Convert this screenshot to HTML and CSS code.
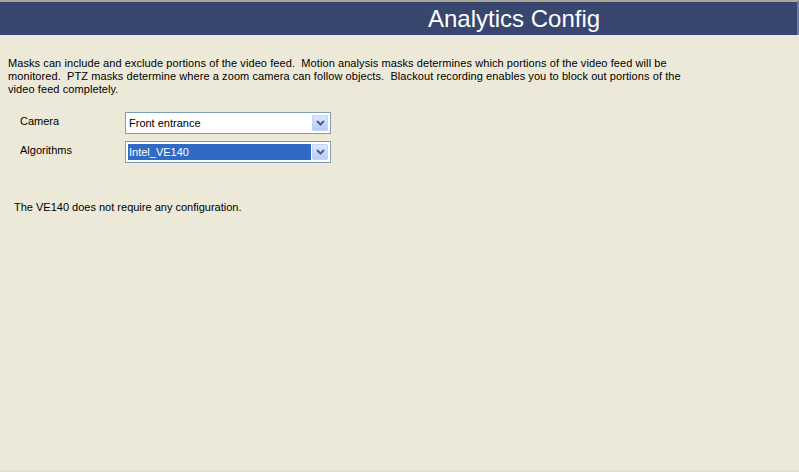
FILE: index.html
```html
<!DOCTYPE html>
<html>
<head>
<meta charset="utf-8">
<link rel="stylesheet" href="styles.css">
</head>
<body>
<div class="page">
  <header class="header">
    <h1 class="title">Analytics Config</h1>
  </header>
  <p class="intro">Masks can include and exclude portions of the video feed.&nbsp; Motion analysis masks determines which portions of the video feed will be monitored.&nbsp; PTZ masks determine where a zoom camera can follow objects.&nbsp; Blackout recording enables you to block out portions of the video feed completely.</p>
  <div class="form">
    <div class="row">
      <span class="label">Camera</span>
      <div class="combo">
        <span class="value">Front entrance</span>
        <span class="btn"><svg width="9" height="6" viewBox="0 0 9 6"><path d="M1 1 L4.5 4.5 L8 1" fill="none" stroke="#4d6185" stroke-width="2"/></svg></span>
      </div>
    </div>
    <div class="row">
      <span class="label">Algorithms</span>
      <div class="combo">
        <span class="value selected">Intel_VE140</span>
        <span class="btn"><svg width="9" height="6" viewBox="0 0 9 6"><path d="M1 1 L4.5 4.5 L8 1" fill="none" stroke="#4d6185" stroke-width="2"/></svg></span>
      </div>
    </div>
  </div>
  <p class="note">The VE140 does not require any configuration.</p>
</div>
</body>
</html>
```

FILE: styles.css
```css
html, body {
  margin: 0;
  padding: 0;
  background: #ece9d8;
}
.page {
  width: 799px;
  height: 472px;
  box-sizing: border-box;
  border-bottom: 2px solid #e4e1d0;
  font-family: "Liberation Sans", Arial, sans-serif;
  font-size: 11px;
  color: #000;
}
.header {
  background: #39466f;
  border-top: 2px solid #a9a899;
  border-right: 2px solid #6d7aa3;
  height: 33px;
  box-sizing: content-box;
  display: flex;
  align-items: center;
}
.title {
  margin: 0 0 0 428px;
  font-weight: normal;
  font-size: 24px;
  color: #ffffff;
  line-height: 33px;
  padding-top: 0;
}
.intro {
  margin: 22px 0 0 8px;
  width: 700px;
  line-height: 13px;
  letter-spacing: 0.08px;
}
.form {
  margin-top: 16px;
  display: flex;
  flex-direction: column;
  gap: 7px;
}
.row {
  display: flex;
  align-items: flex-start;
}
.label {
  width: 105px;
  padding-left: 20px;
  padding-top: 3px;
}
.combo {
  width: 206px;
  height: 22px;
  box-sizing: border-box;
  border: 1px solid #7f9db9;
  background: #fff;
  display: flex;
  align-items: center;
  padding: 2px;
  gap: 1px;
}
.value {
  flex: 1;
  height: 16px;
  line-height: 16px;
  padding-left: 1px;
  font-size: 11px;
}
.value.selected {
  background: #316ac5;
  color: #fff;
}
.btn {
  width: 16px;
  height: 16px;
  box-sizing: border-box;
  border: 1px solid #c3d3fd;
  border-radius: 1px;
  background: linear-gradient(#dce6fd, #b9cbf7);
  display: flex;
  align-items: center;
  justify-content: center;
}
.note {
  margin: 38px 0 0 14px;
}
```
